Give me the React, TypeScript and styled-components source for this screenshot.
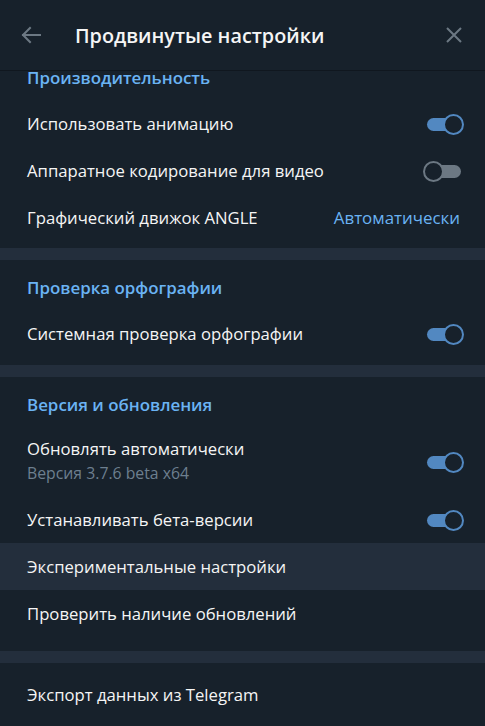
import React, { useLayoutEffect, useRef } from "react";
import styled, { createGlobalStyle } from "styled-components";

const Global = createGlobalStyle`
  html, body { margin: 0; padding: 0; background: #17212b; }
  * { box-sizing: border-box; }
  body { font-family: "Open Sans", "Noto Sans", sans-serif; }
`;

const Window = styled.div`
  width: 485px;
  height: 726px;
  background: #17212b;
  display: flex;
  flex-direction: column;
  overflow: hidden;
  color: #f5f5f5;
`;

const Header = styled.div`
  height: 71px;
  flex: none;
  display: flex;
  align-items: center;
  padding: 0 20px 0 20px;
  border-bottom: 1px solid #10171f;
`;

const IconBtn = styled.button`
  border: 0;
  background: none;
  padding: 0;
  width: 22px;
  height: 22px;
  display: flex;
  align-items: center;
  justify-content: center;
  color: #6c7883;
  cursor: pointer;
`;

const Title = styled.div`
  flex: 1;
  margin-left: 33px;
  font-size: 19.8px;
  font-weight: 600;
  color: #f5f5f5;
`;

const Scroll = styled.div`
  flex: 1;
  overflow-y: auto;
  scrollbar-width: none;
  &::-webkit-scrollbar { display: none; }
`;

const Section = styled.section<{ $bottom?: number }>`
  padding: 16px 0 ${(p) => p.$bottom ?? 8}px;
  display: flex;
  flex-direction: column;
`;

const PlainSection = styled.section`
  padding: 8px 0;
`;

const Divider = styled.div`
  height: 12px;
  background: #232e3c;
`;

const SectionTitle = styled.div`
  padding: 0 27px;
  height: 24px;
  line-height: 24px;
  margin-bottom: 10px;
  font-size: 16.9px;
  font-weight: 600;
  color: #6ab3f3;
`;

const Row = styled.div<{ $hover?: boolean; $tall?: boolean }>`
  height: ${(p) => (p.$tall ? 69 : 47)}px;
  padding: 0 22px 0 27px;
  display: flex;
  align-items: center;
  justify-content: space-between;
  background: ${(p) => (p.$hover ? "#232e3c" : "transparent")};
`;

const Labels = styled.div`
  display: flex;
  flex-direction: column;
  gap: 2px;
  margin-top: -2px;
`;

const Label = styled.div`
  font-size: 16.7px;
  line-height: 22px;
  color: #f5f5f5;
`;

const Sub = styled.div`
  font-size: 15.8px;
  line-height: 22px;
  color: #6d7f8f;
`;

const Value = styled.div`
  font-size: 16.9px;
  color: #6ab3f3;
  margin-right: 3px;
`;

const ToggleWrap = styled.div`
  position: relative;
  width: 40px;
  height: 20px;
  flex: none;
`;

const Track = styled.div<{ $on: boolean }>`
  position: absolute;
  top: 4px;
  left: 4px;
  width: 34px;
  height: 13px;
  border-radius: 7px;
  background: ${(p) => (p.$on ? "#5288c1" : "#6c7883")};
`;

const Knob = styled.div<{ $on: boolean }>`
  position: absolute;
  top: 0;
  left: ${(p) => (p.$on ? 20 : 0)}px;
  width: 21px;
  height: 21px;
  border-radius: 50%;
  background: #17212b;
  border: 2px solid ${(p) => (p.$on ? "#5288c1" : "#6c7883")};
`;

const Toggle = ({ on }: { on: boolean }) => (
  <ToggleWrap>
    <Track $on={on} />
    <Knob $on={on} />
  </ToggleWrap>
);

export default function App() {
  const ref = useRef<HTMLDivElement>(null);
  useLayoutEffect(() => {
    if (ref.current) ref.current.scrollTop = 21;
  }, []);
  return (
    <>
      <Global />
      <Window>
        <Header>
          <IconBtn aria-label="back">
            <svg width="22" height="22" viewBox="0 0 22 22" fill="none" stroke="currentColor" strokeWidth="2" strokeLinecap="square">
              <path d="M20 11H3M10 4L3 11L10 18" />
            </svg>
          </IconBtn>
          <Title>Продвинутые настройки</Title>
          <IconBtn aria-label="close">
            <svg width="18" height="18" viewBox="0 0 18 18" fill="none" stroke="currentColor" strokeWidth="2">
              <path d="M2 2L16 16M16 2L2 16" />
            </svg>
          </IconBtn>
        </Header>
        <Scroll ref={ref}>
          <Section $bottom={7}>
            <SectionTitle>Производительность</SectionTitle>
            <Row>
              <Label>Использовать анимацию</Label>
              <Toggle on />
            </Row>
            <Row>
              <Label>Аппаратное кодирование для видео</Label>
              <Toggle on={false} />
            </Row>
            <Row>
              <Label>Графический движок ANGLE</Label>
              <Value>Автоматически</Value>
            </Row>
          </Section>
          <Divider />
          <Section>
            <SectionTitle>Проверка орфографии</SectionTitle>
            <Row>
              <Label>Системная проверка орфографии</Label>
              <Toggle on />
            </Row>
          </Section>
          <Divider />
          <Section $bottom={14}>
            <SectionTitle>Версия и обновления</SectionTitle>
            <Row $tall>
              <Labels>
                <Label>Обновлять автоматически</Label>
                <Sub>Версия 3.7.6 beta x64</Sub>
              </Labels>
              <Toggle on />
            </Row>
            <Row>
              <Label>Устанавливать бета-версии</Label>
              <Toggle on />
            </Row>
            <Row $hover>
              <Label>Экспериментальные настройки</Label>
            </Row>
            <Row>
              <Label>Проверить наличие обновлений</Label>
            </Row>
          </Section>
          <Divider />
          <PlainSection>
            <Row>
              <Label>Экспорт данных из Telegram</Label>
            </Row>
          </PlainSection>
        </Scroll>
      </Window>
    </>
  );
}
